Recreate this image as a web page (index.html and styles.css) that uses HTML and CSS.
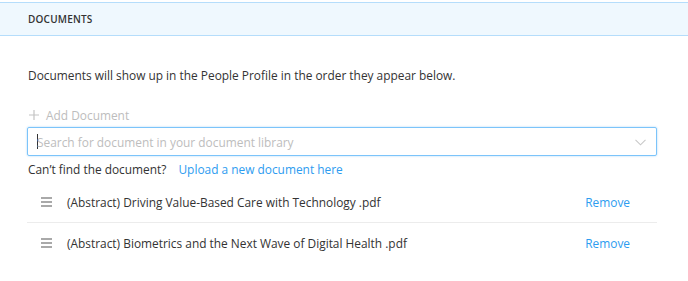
FILE: index.html
```html
<!DOCTYPE html>
<html>
<head>
<meta charset="utf-8">
<link rel="stylesheet" href="styles.css">
</head>
<body>
<div class="panel">
  <div class="panel-header">DOCUMENTS</div>
  <div class="panel-body">
    <p class="intro">Documents will show up in the People Profile in the order they appear below.</p>
    <div class="add">
      <svg class="plus" width="10" height="10" viewBox="0 0 10 10"><path d="M5 0v10M0 5h10" stroke="#c4c4c4" stroke-width="1.2"/></svg>
      <span>Add Document</span>
    </div>
    <div class="select">
      <span class="caret"></span>
      <span class="placeholder">Search for document in your document library</span>
      <svg class="chevron" width="11" height="7" viewBox="0 0 11 7"><path d="M0.5 0.8L5.5 5.8L10.5 0.8" fill="none" stroke="#c8c8c8" stroke-width="1.1"/></svg>
    </div>
    <div class="help">
      <span>Can’t find the document?</span>
      <a class="link">Upload a new document here</a>
    </div>
    <ul class="docs">
      <li class="doc">
        <svg class="grip" width="11" height="10" viewBox="0 0 11 10"><path d="M0 1h11M0 5h11M0 9h11" stroke="#555" stroke-width="1.2"/></svg>
        <span class="name">(Abstract) Driving Value-Based Care with Technology .pdf</span>
        <a class="link remove">Remove</a>
      </li>
      <li class="doc">
        <svg class="grip" width="11" height="10" viewBox="0 0 11 10"><path d="M0 1h11M0 5h11M0 9h11" stroke="#555" stroke-width="1.2"/></svg>
        <span class="name">(Abstract) Biometrics and the Next Wave of Digital Health .pdf</span>
        <a class="link remove">Remove</a>
      </li>
    </ul>
  </div>
</div>
</body>
</html>
```

FILE: styles.css
```css
* { box-sizing: border-box; }
html, body { margin: 0; padding: 0; background: #fff; }
body {
  font-family: "Open Sans", "Liberation Sans", sans-serif;
  color: #333;
  font-size: 11.9px;
}
.panel { padding-top: 2px; }
.panel-header {
  height: 34px;
  background: #eff8fe;
  border-top: 1px solid #b5ddfb;
  border-bottom: 1px solid #b5ddfb;
  padding-left: 28px;
  display: flex;
  align-items: center;
  font-size: 10px;
  font-weight: 600;
  letter-spacing: 0.2px;
  color: #333;
}
.panel-body { padding: 0 31px 0 27px; }
.intro {
  margin: 30px 0 0 1px;
  line-height: 18px;
}
.add {
  margin-top: 22px;
  display: flex;
  align-items: center;
  gap: 7px;
  color: #bdbdbd;
  height: 18px;
  padding-left: 2px;
}
.select {
  margin-top: 3px;
  height: 29px;
  border: 1px solid #7cc4fa;
  border-radius: 2px;
  box-shadow: 0 0 2px rgba(45,156,240,0.45);
  display: flex;
  align-items: center;
  padding-left: 9px;
  padding-right: 10px;
}
.caret {
  width: 1px;
  height: 15px;
  background: #333;
  margin-right: -1px;
}
.placeholder { color: #bdbdbd; flex: 1; }
.chevron { margin-top: 1px; }
.help {
  margin-top: 4px;
  display: flex;
  gap: 12px;
  line-height: 18px;
  padding-left: 1px;
}
.link { color: #2d9cf0; text-decoration: none; }
.docs { list-style: none; margin: 3px 0 0 0; padding: 0; }
.doc {
  display: flex;
  align-items: center;
  height: 41px;
  padding-left: 14px;
  padding-right: 27px;
}
.doc + .doc { border-top: 1px solid #ececec; }
.grip { margin-right: 15px; }
.name { flex: 1; }
```
